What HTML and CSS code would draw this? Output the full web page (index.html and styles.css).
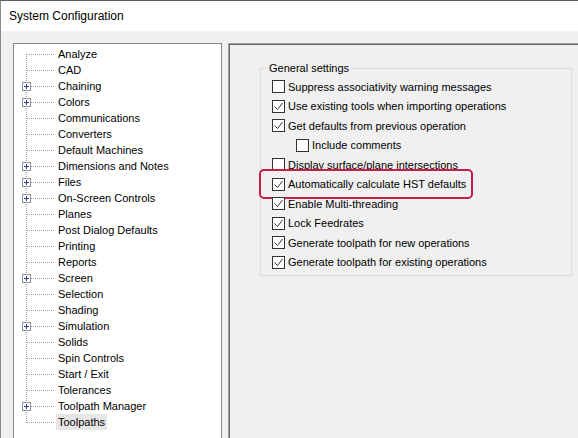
FILE: index.html
```html
<!DOCTYPE html>
<html>
<head>
<meta charset="utf-8">
<link rel="stylesheet" href="styles.css">
</head>
<body>
<div class="window">
  <div class="titlebar">System Configuration</div>
  <div class="content">
    <div class="tree">
      <ul class="tree-list">
        <li class="row"><span class="branch"></span><span class="label">Analyze</span></li>
        <li class="row"><span class="branch"></span><span class="label">CAD</span></li>
        <li class="row"><span class="branch"><span class="plus"><svg width="9" height="9" viewBox="0 0 9 9"><path d="M2 4.5h5M4.5 2v5" stroke="#1f3f9a" stroke-width="1"/></svg></span></span><span class="label">Chaining</span></li>
        <li class="row"><span class="branch"><span class="plus"><svg width="9" height="9" viewBox="0 0 9 9"><path d="M2 4.5h5M4.5 2v5" stroke="#1f3f9a" stroke-width="1"/></svg></span></span><span class="label">Colors</span></li>
        <li class="row"><span class="branch"></span><span class="label">Communications</span></li>
        <li class="row"><span class="branch"></span><span class="label">Converters</span></li>
        <li class="row"><span class="branch"></span><span class="label">Default Machines</span></li>
        <li class="row"><span class="branch"><span class="plus"><svg width="9" height="9" viewBox="0 0 9 9"><path d="M2 4.5h5M4.5 2v5" stroke="#1f3f9a" stroke-width="1"/></svg></span></span><span class="label">Dimensions and Notes</span></li>
        <li class="row"><span class="branch"><span class="plus"><svg width="9" height="9" viewBox="0 0 9 9"><path d="M2 4.5h5M4.5 2v5" stroke="#1f3f9a" stroke-width="1"/></svg></span></span><span class="label">Files</span></li>
        <li class="row"><span class="branch"><span class="plus"><svg width="9" height="9" viewBox="0 0 9 9"><path d="M2 4.5h5M4.5 2v5" stroke="#1f3f9a" stroke-width="1"/></svg></span></span><span class="label">On-Screen Controls</span></li>
        <li class="row"><span class="branch"></span><span class="label">Planes</span></li>
        <li class="row"><span class="branch"></span><span class="label">Post Dialog Defaults</span></li>
        <li class="row"><span class="branch"></span><span class="label">Printing</span></li>
        <li class="row"><span class="branch"></span><span class="label">Reports</span></li>
        <li class="row"><span class="branch"><span class="plus"><svg width="9" height="9" viewBox="0 0 9 9"><path d="M2 4.5h5M4.5 2v5" stroke="#1f3f9a" stroke-width="1"/></svg></span></span><span class="label">Screen</span></li>
        <li class="row"><span class="branch"></span><span class="label">Selection</span></li>
        <li class="row"><span class="branch"></span><span class="label">Shading</span></li>
        <li class="row"><span class="branch"><span class="plus"><svg width="9" height="9" viewBox="0 0 9 9"><path d="M2 4.5h5M4.5 2v5" stroke="#1f3f9a" stroke-width="1"/></svg></span></span><span class="label">Simulation</span></li>
        <li class="row"><span class="branch"></span><span class="label">Solids</span></li>
        <li class="row"><span class="branch"></span><span class="label">Spin Controls</span></li>
        <li class="row"><span class="branch"></span><span class="label">Start / Exit</span></li>
        <li class="row"><span class="branch"></span><span class="label">Tolerances</span></li>
        <li class="row"><span class="branch"><span class="plus"><svg width="9" height="9" viewBox="0 0 9 9"><path d="M2 4.5h5M4.5 2v5" stroke="#1f3f9a" stroke-width="1"/></svg></span></span><span class="label">Toolpath Manager</span></li>
        <li class="row"><span class="branch"></span><span class="label selected">Toolpaths</span></li>
      </ul>
    </div>
    <div class="panel">
      <fieldset class="group">
        <legend class="group-title">General settings</legend>
        <div class="opt"><span class="cb"></span><span class="opt-text">Suppress associativity warning messages</span></div>
        <div class="opt"><span class="cb"><svg width="11" height="11" viewBox="0 0 11 11"><path d="M1.5 5.5l3 3l5-6.5" fill="none" stroke="#333" stroke-width="1"/></svg></span><span class="opt-text">Use existing tools when importing operations</span></div>
        <div class="opt"><span class="cb"><svg width="11" height="11" viewBox="0 0 11 11"><path d="M1.5 5.5l3 3l5-6.5" fill="none" stroke="#333" stroke-width="1"/></svg></span><span class="opt-text">Get defaults from previous operation</span></div>
        <div class="opt indent"><span class="cb"></span><span class="opt-text">Include comments</span></div>
        <div class="opt"><span class="cb"></span><span class="opt-text">Display surface/plane intersections</span></div>
        <div class="opt highlighted"><span class="cb"><svg width="11" height="11" viewBox="0 0 11 11"><path d="M1.5 5.5l3 3l5-6.5" fill="none" stroke="#333" stroke-width="1"/></svg></span><span class="opt-text">Automatically calculate HST defaults</span><span class="callout"></span></div>
        <div class="opt"><span class="cb"><svg width="11" height="11" viewBox="0 0 11 11"><path d="M1.5 5.5l3 3l5-6.5" fill="none" stroke="#333" stroke-width="1"/></svg></span><span class="opt-text">Enable Multi-threading</span></div>
        <div class="opt"><span class="cb"><svg width="11" height="11" viewBox="0 0 11 11"><path d="M1.5 5.5l3 3l5-6.5" fill="none" stroke="#333" stroke-width="1"/></svg></span><span class="opt-text">Lock Feedrates</span></div>
        <div class="opt"><span class="cb"><svg width="11" height="11" viewBox="0 0 11 11"><path d="M1.5 5.5l3 3l5-6.5" fill="none" stroke="#333" stroke-width="1"/></svg></span><span class="opt-text">Generate toolpath for new operations</span></div>
        <div class="opt"><span class="cb"><svg width="11" height="11" viewBox="0 0 11 11"><path d="M1.5 5.5l3 3l5-6.5" fill="none" stroke="#333" stroke-width="1"/></svg></span><span class="opt-text">Generate toolpath for existing operations</span></div>
      </fieldset>
    </div>
  </div>
</div>
</body>
</html>
```

FILE: styles.css
```css
html, body {
  margin: 0;
  padding: 0;
  width: 578px;
  height: 438px;
  overflow: hidden;
  background: #f0f0f0;
  font-family: "Liberation Sans", Arial, sans-serif;
  font-size: 11px;
  color: #000;
}

.window {
  height: 438px;
  overflow: hidden;
  border-top: 1px solid #5a5a5a;
  border-left: 1px solid #8a8a8a;
  box-sizing: border-box;
}

.titlebar {
  height: 30px;
  background: #fff;
  font-size: 12px;
  line-height: 30px;
  padding-left: 8px;
}

.content {
  display: flex;
  padding: 12px 0 0 12px;
  height: 407px;
  box-sizing: border-box;
}

.tree {
  width: 209px;
  flex: none;
  background: #fff;
  border: 1px solid #828790;
  box-sizing: border-box;
  padding-top: 2px;
  height: 396px;
}

.tree-list {
  list-style: none;
  margin: 0;
  padding: 0;
  background-image: repeating-linear-gradient(to bottom, #a0a0a0 0 1px, transparent 1px 2px);
  background-size: 1px calc(100% - 15px);
  background-position: 12px 8px;
  background-repeat: no-repeat;
}

.row {
  display: flex;
  align-items: center;
  height: 16px;
}

.branch {
  width: 42px;
  height: 16px;
  flex: none;
  display: flex;
  align-items: center;
  padding-left: 8px;
  box-sizing: border-box;
  background-image: repeating-linear-gradient(to right, #a0a0a0 0 1px, transparent 1px 2px);
  background-size: 27px 1px;
  background-position: 13px 8px;
  background-repeat: no-repeat;
}

.plus {
  width: 9px;
  height: 9px;
  box-sizing: border-box;
  border: 1px solid #919191;
  background: #fff;
  display: flex;
  align-items: center;
  justify-content: center;
  margin-top: 1px;
}

.plus svg {
  display: block;
  flex: none;
}

.label {
  padding: 0 2px;
  line-height: 16px;
  white-space: nowrap;
}

.label.selected {
  background: #e6e6e6;
}

.panel {
  flex: 1;
  margin-left: 6px;
  border-top: 1px solid #a0a0a0;
  border-left: 1px solid #a0a0a0;
  box-shadow: inset 1px 1px 0 #696969;
  padding: 18px 6px 0 31px;
  height: 396px;
  box-sizing: border-box;
}

.group {
  margin: 0;
  padding: 2px 0 3px 11px;
  border: 1px solid #dcdcdc;
  min-width: 0;
}

.group-title {
  padding: 0 2px;
  margin-left: -5px;
  line-height: 13px;
}

.opt {
  display: flex;
  align-items: center;
  height: 19.5px;
  position: relative;
}

.opt.indent {
  padding-left: 24px;
}

.cb {
  width: 13px;
  height: 13px;
  box-sizing: border-box;
  border: 1px solid #333;
  background: #fff;
  flex: none;
  display: flex;
  align-items: center;
  justify-content: center;
}

.cb svg {
  display: block;
}

.opt-text {
  margin-left: 3px;
  white-space: nowrap;
}

.callout {
  position: absolute;
  left: -13px;
  top: -6px;
  width: 214px;
  height: 30px;
  border: 2px solid #c41f4a;
  border-radius: 5px;
  box-sizing: border-box;
  pointer-events: none;
}
```
